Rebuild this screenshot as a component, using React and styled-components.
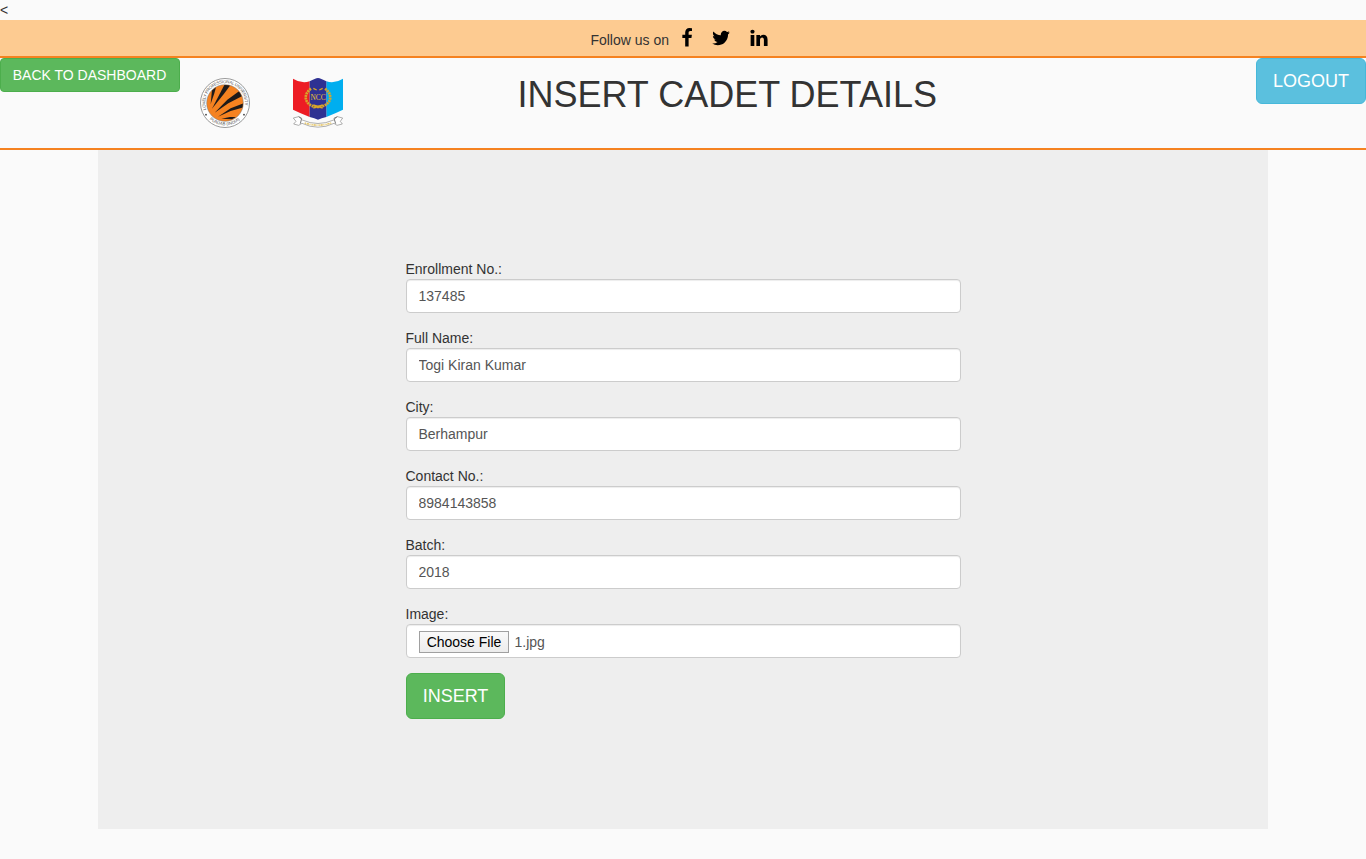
import React from "react";
import styled, { createGlobalStyle, css } from "styled-components";

const GlobalStyle = createGlobalStyle`
  *, *::before, *::after { box-sizing: border-box; }
  body {
    margin: 0;
    background: #fafafa;
    color: #333;
    font-family: "Liberation Sans", Arial, sans-serif;
    font-size: 14px;
    line-height: 20px;
  }
`;

const Page = styled.div`
  min-height: 859px;
  overflow: hidden;
`;

const StrayLine = styled.div`
  height: 20px;
`;

const SocialBar = styled.div`
  display: flex;
  height: 38px;
  padding: 8px 0 0 590.4px;
  background: #fdcb91;
  border-bottom: 2px solid #f58220;
`;

const FollowText = styled.span`
  width: 86.6px;
  padding-top: 2px;
`;

const SocialIcon = styled.svg`
  width: 20px;
  height: 20px;
  margin-right: ${(p) => p.$gap || 0}px;
  fill: #000;
`;

const Header = styled.header`
  display: flex;
  align-items: flex-start;
  height: 92px;
  border-bottom: 2px solid #f58220;
`;

const Button = styled.button`
  flex: none;
  width: ${(p) => p.$width}px;
  padding: 6px 1px 6px 0;
  border: 1px solid #4cae4c;
  border-radius: 4px;
  background: #5cb85c;
  color: #fff;
  font: 14px/20px "Liberation Sans", Arial, sans-serif;
  text-align: center;
  white-space: nowrap;
  cursor: pointer;
  ${(p) =>
    p.$large &&
    css`
      height: 46px;
      padding: 10px 0;
      border-radius: 6px;
      font-size: 18px;
      line-height: 24px;
    `}
  ${(p) =>
    p.$info &&
    css`
      border-color: #46b8da;
      background: #5bc0de;
    `}
`;

const Logos = styled.div`
  display: flex;
  gap: 42px;
  margin: 20px 0 0 20px;
`;

const Logo = styled.svg`
  display: block;
  width: ${(p) => p.$width}px;
  height: 50px;
`;

const Title = styled.h1`
  margin: 17px auto 0 173.5px;
  font-size: 36px;
  font-weight: 400;
  line-height: 40px;
  white-space: nowrap;
`;

const Panel = styled.main`
  width: 1170px;
  height: 679px;
  margin: 0 auto;
  padding: 109px 307px 0 308px;
  background: #eee;
`;

const Field = styled.label`
  display: block;
  margin-bottom: 15px;
`;

const FieldName = styled.span`
  display: block;
  height: 20px;
  margin-left: -0.5px;
`;

const controlBox = css`
  display: block;
  width: 100%;
  height: 34px;
  padding: 6px 11.5px;
  border: 1px solid #ccc;
  border-radius: 4px;
  background: #fff;
  box-shadow: inset 0 1px 1px rgba(0, 0, 0, 0.075);
  color: #555;
  font: 14px/20px "Liberation Sans", Arial, sans-serif;
`;

const TextInput = styled.input`
  ${controlBox}
`;

const FileBox = styled.span`
  ${controlBox}
  && {
    display: flex;
    gap: 5.5px;
    padding-left: 12px;
  }
`;

const FileButton = styled.span`
  width: 90px;
  height: 22px;
  border: 1px solid #a0a0a0;
  background: linear-gradient(#f9f9f9, #ececec);
  color: #000;
  text-align: center;
`;

const FileName = styled.span`
  padding-top: 1px;
`;

const fields = [
  ["Enrollment No.:", "137485"],
  ["Full Name:", "Togi Kiran Kumar"],
  ["City:", "Berhampur"],
  ["Contact No.:", "8984143858"],
  ["Batch:", "2018"],
];

const socials = [
  {
    name: "Facebook",
    gap: 14.2,
    d: "M1343 12v264h-157q-86 0-116 36t-30 108v189h293l-39 296h-254v759h-306v-759h-255v-296h255v-218q0-186 104-288.500t277-102.500q147 0 228 12z",
  },
  {
    name: "Twitter",
    gap: 17.8,
    d: "M1684 408q-67 98-162 167 1 14 1 42 0 130-38 259.500t-115.500 248.500-184.500 210.500-258 146-323 54.500q-271 0-496-145 35 4 78 4 225 0 401-138-105-2-188-64.500t-114-159.500q33 5 61 5 43 0 85-11-112-23-185.500-111.500t-73.500-205.500v-4q68 38 146 41-66-44-105-115t-39-154q0-88 44-163 121 149 294.500 238.500t371.500 99.500q-8-38-8-74 0-134 94.500-228.500t228.500-94.500q140 0 236 102 109-21 205-78-37 115-142 178 93-10 186-50z",
  },
  {
    name: "LinkedIn",
    d: "M477 625v991h-330v-991h330zm21-306q1 73-50.500 122t-135.500 49h-2q-82 0-132-49t-50-122q0-74 51.500-122.500t134.500-48.500 133 48.500 51 122.500zm1166 729v568h-329v-530q0-105-40.500-164.500t-126.500-59.500q-63 0-105.500 34.500t-63.500 85.500q-11 30-11 81v553h-329q2-399 2-647t-1-296l-1-48h329v144h-2q20-32 41-56t56.500-52 87-43.500 114.500-15.500q171 0 275 113.500t104 332.500z",
  },
];

function UniversityLogo() {
  return (
    <Logo $width={50} viewBox="0 0 150 150" aria-label="Lovely Professional University">
      <defs>
        <clipPath id="disc"><circle cx="75" cy="75" r="54" /></clipPath>
        <path id="ringTop" d="M19 95A59.500 59.500 0 1 1 131 95" />
        <path id="ringBottom" d="M23 118A68 68 0 0 0 127 118" />
      </defs>
      <circle cx="75" cy="75" r="73.5" fill="#fff" stroke="#858585" strokeWidth="2.5" />
      <g fontFamily="Liberation Sans, sans-serif" fontSize="13" fill="#555">
        <text textLength="214"><textPath href="#ringTop">LOVELY PROFESSIONAL UNIVERSITY</textPath></text>
        <text textLength="100"><textPath href="#ringBottom" startOffset="8">PUNJAB (INDIA)</textPath></text>
      </g>
      <circle cx="75" cy="75" r="55" fill="#f58220" stroke="#777" strokeWidth="1.5" />
      <g clipPath="url(#disc)" fill="#1d1a1a">
        <path d="M32 78L36 36L49 24L43 46Z" />
        <path d="M36 92L75 17L91 22L72 47Z" />
        <path d="M44 104L82 65L118 39L127 54L85 76Z" />
        <path d="M54 116L92 91L133 75L130 88L92 99Z" />
        <path d="M64 122L90 117L108 117L96 124Z" />
      </g>
      <circle cx="18" cy="110" r="2.5" fill="#333" />
      <circle cx="132" cy="110" r="2.5" fill="#333" />
    </Logo>
  );
}

function CorpsLogo() {
  return (
    <Logo $width={52} viewBox="0 0 156 150" aria-label="NCC">
      <path d="M3 2Q28 18 53 10V117Q26 106 3 95Z" fill="#ed1c24" />
      <path d="M153 2Q128 18 103 10V117Q130 106 153 95Z" fill="#00aeef" />
      <path d="M53 10Q70 1 78 0Q86 1 103 10V117Q88 121 78 125Q68 121 53 117Z" fill="#2e3192" />
      <path d="M57 32C27 54 43 86 77 87C113 86 129 54 99 32" fill="none" stroke="#d8a629" strokeWidth="8" strokeDasharray="6 2" />
      <path d="M64 31L74 36M92 31L82 36M64 90L92 81M64 81L92 90" fill="none" stroke="#d8a629" strokeWidth="4" />
      <text x="78" y="66" textAnchor="middle" fontFamily="Liberation Serif, serif" fontSize="22" fill="#f0c232">NCC</text>
      <path d="M4 120L20 116L31 126Q78 147 125 126L136 116L152 120L145 130L151 138L135 142L126 136Q78 159 30 136L20 142L5 138L12 130Z" fill="#fff" stroke="#888" strokeWidth="2" />
      <path d="M20 116L29 121L25 137M136 116L126 121L131 137" fill="none" stroke="#777" strokeWidth="3" />
      <path d="M38 135Q78 148 118 135" fill="none" stroke="#e5c871" strokeWidth="5" strokeDasharray="4 2 7 2 3 3" />
    </Logo>
  );
}

export default function App() {
  return (
    <Page>
      <GlobalStyle />
      <StrayLine>&lt;</StrayLine>
      <SocialBar>
        <FollowText>Follow us on</FollowText>
        {socials.map((s) => (
          <SocialIcon key={s.name} $gap={s.gap} viewBox="0 0 1792 1792" aria-label={s.name}>
            <path d={s.d} />
          </SocialIcon>
        ))}
      </SocialBar>
      <Header>
        <Button $width={180}>BACK TO DASHBOARD</Button>
        <Logos>
          <UniversityLogo />
          <CorpsLogo />
        </Logos>
        <Title>INSERT CADET DETAILS</Title>
        <Button $width={110} $large $info>LOGOUT</Button>
      </Header>
      <Panel>
        {fields.map(([name, value]) => (
          <Field key={name}>
            <FieldName>{name}</FieldName>
            <TextInput defaultValue={value} />
          </Field>
        ))}
        <Field>
          <FieldName>Image:</FieldName>
          <FileBox>
            <FileButton>Choose File</FileButton>
            <FileName>1.jpg</FileName>
          </FileBox>
        </Field>
        <Button $width={99} $large>INSERT</Button>
      </Panel>
    </Page>
  );
}
